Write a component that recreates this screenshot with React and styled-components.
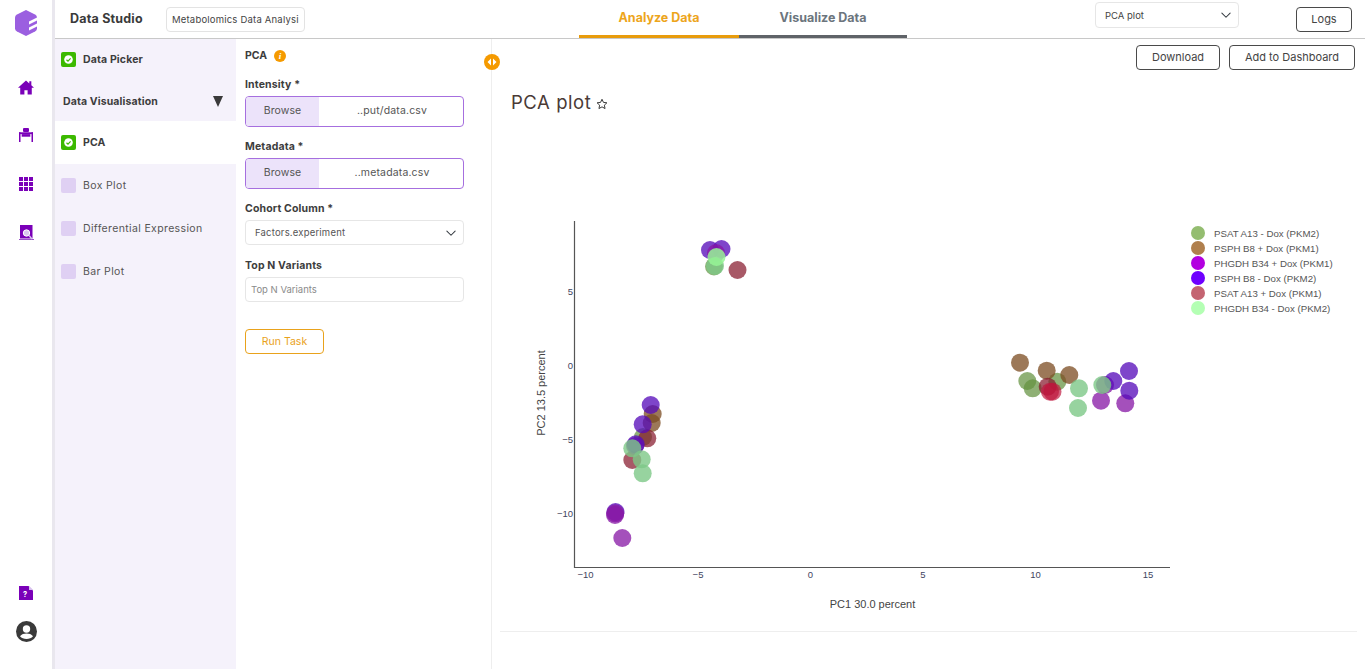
import React from 'react';
import styled, { createGlobalStyle } from 'styled-components';

const Global = createGlobalStyle`
  html, body { margin: 0; padding: 0; background: #fff; }
  * { box-sizing: border-box; }
  body { font-family: Inter, "Noto Sans", "Liberation Sans", sans-serif; color: #3d3d3d; }
`;

const Page = styled.div`display: flex; width: 100%; height: 100vh; overflow: hidden; background: #fff;`;
const Rail = styled.nav`
  width: 55px; flex: none; display: flex; flex-direction: column; align-items: center;
  border-right: 3px solid #e9e7ee; padding-bottom: 19px;
`;
const LogoSlot = styled.div`height: 46px; width: 100%; display: flex; align-items: center; justify-content: center; margin-bottom: 17px;`;
const NavSlot = styled.div`height: ${p => p.$h || 48.4}px; width: 100%; display: flex; align-items: center; justify-content: center;`;
const Spacer = styled.div`flex: 1;`;

const Shell = styled.div`flex: 1; min-width: 0; display: flex; flex-direction: column;`;
const Header = styled.header`
  height: 39px; flex: none; display: flex; align-items: flex-start; border-bottom: 1px solid #c8c8c8;
`;
const Brand = styled.div`font-size: 12.5px; font-weight: 700; letter-spacing: .2px; color: #3a3a3a; margin: 11px 0 0 15px; width: 96px; line-height: 15px;`;
const NameInput = styled.input`
  width: 139px; height: 25px; margin-top: 7px; border: 1px solid #e3e3e3; border-radius: 4px; padding: 0 5px;
  font: 400 9.5px Inter, sans-serif; letter-spacing: .2px; color: #444; outline: none; background: #fff;
`;
const Tabs = styled.div`display: flex; margin-left: 274px; height: 38px;`;
const Tab = styled.div`
  width: ${p => p.$w}px; height: 38px; text-align: center; padding-top: 10px; line-height: 16px;
  font-size: 12.500px; font-weight: 700; color: ${p => p.$c};
  border-bottom: 3px solid ${p => p.$c};
`;
const TabLabel = styled.span`color: ${p => p.$c};`;
const PlotSelect = styled.div`
  width: 144px; height: 26px; margin: 2px 0 0 188px; border: 1px solid #e6e6e6; border-radius: 4px;
  display: flex; align-items: center; justify-content: space-between; padding: 0 6px 0 9px;
  font-size: 9.5px; color: #444;
`;
const OutlineButton = styled.button`
  height: 25px; width: ${p => p.$w}px; border: 1px solid #4a4a4a; border-radius: 4px; background: #fff;
  font: 400 11px Inter, sans-serif; color: #444; padding: 0 0 2px; flex: none;
`;
const LogsButton = styled(OutlineButton)`margin: 7px 0 0 57px;`;

const Body = styled.div`flex: 1; min-height: 0; display: flex; position: relative;`;
const Sidebar = styled.aside`width: 181px; flex: none; background: #f5f2fb;`;
const StepRow = styled.div`
  height: ${p => p.$h || 43}px; display: flex; align-items: center; gap: 7px; padding-left: 6px;
  background: ${p => p.$active ? '#fff' : 'transparent'};
  font-size: 10.500px; font-weight: ${p => p.$bold ? 700 : 400}; letter-spacing: ${p => p.$bold ? '.15px' : '.36px'};
  color: ${p => p.$bold ? '#3d3d3d' : '#555'};
`;
const StepIdle = styled.span`width: 15px; height: 15px; border-radius: 2px; background: #dfd0f3; flex: none;`;
const GroupRow = styled.div`
  height: 41px; display: flex; align-items: center; justify-content: space-between; padding: 1px 13px 0 8px;
  font-size: 10.500px; font-weight: 700; letter-spacing: .12px; color: #3d3d3d;
`;
const Caret = styled.span`width: 0; height: 0; border-left: 5.5px solid transparent; border-right: 5.5px solid transparent; border-top: 11px solid #3a3a3a;`;

const Form = styled.section`width: 256px; flex: none; padding: 9px 0 0 9px; border-right: 1px solid #eeeeee;`;
const FormTitle = styled.div`display: flex; align-items: center; gap: 7px; height: 15px; font-size: 10.500px; font-weight: 700; color: #3d3d3d; margin-bottom: 14px;`;
const Label = styled.label`display: block; font-size: 10.500px; font-weight: 700; letter-spacing: .15px; color: #3d3d3d; line-height: 14px; padding-top: 1px; margin-bottom: 4px;`;
const FileField = styled.div`
  width: 219px; height: 31px; display: flex; border: 1px solid #a66fdf; border-radius: 4px; overflow: hidden; margin-bottom: 12px;
  font-size: 10.500px; color: #555; letter-spacing: .1px;
`;
const BrowseTag = styled.span`width: 73px; flex: none; background: #ece3fa; display: flex; align-items: center; justify-content: center; padding-bottom: 2px;`;
const FileName = styled.span`flex: 1; display: flex; align-items: center; justify-content: center; padding: 0 0 2px 2px; letter-spacing: .15px;`;
const SelectBox = styled.div`
  width: 219px; height: 25px; border: 1px solid #e6e6e6; border-radius: 4px; display: flex; align-items: center; justify-content: space-between;
  padding: 0 6px 0 9px; font-size: 9.5px; letter-spacing: .2px; color: #555; margin-bottom: 13px;
`;
const NumberInput = styled.input`
  display: block; width: 219px; height: 25px; border: 1px solid #e6e6e6; border-radius: 4px; padding: 0 5px;
  font: 400 9.5px Inter, sans-serif; color: #555; outline: none;
  &::placeholder { color: #8a8a8a; opacity: 1; }
`;
const RunButton = styled.button`
  display: block; width: 79px; height: 25px; margin-top: 27px; border: 1px solid #e9a21b; border-radius: 4px; background: #fff;
  font: 400 10.500px Inter, sans-serif; color: #e9a21b; padding: 0 0 1px;
`;
const Toggle = styled.button`
  position: absolute; left: 429px; top: 15px; width: 16px; height: 16px; border-radius: 50%; border: 0; padding: 0;
  background: #f59a00; display: flex; align-items: center; justify-content: center;
`;

const Main = styled.main`flex: 1; min-width: 0; display: flex; flex-direction: column;`;
const Actions = styled.div`display: flex; justify-content: flex-end; gap: 9px; padding: 6px 10px 0 0;`;
const PlotTitle = styled.h2`
  margin: 20px 0 0 19px; height: 24px; display: flex; align-items: center; gap: 5px;
  font-size: 18.500px; font-weight: 400; letter-spacing: .55px; line-height: 24px; color: #4a3a36;
`;
const ChartFrame = styled.div`margin-top: 86px; height: 431px; flex: none;`;
const Divider = styled.div`height: 1px; margin: 0 8px; background: #eeeeee;`;

const Svg = styled.svg`display: block;`;
const TickText = styled.text`font: 400 9.5px "Liberation Sans", sans-serif; fill: #3f4560;`;
const AxisTitle = styled.text`font: 400 11px "Liberation Sans", sans-serif; fill: #444;`;
const LegendText = styled.text`font: 400 9.700px "Liberation Sans", sans-serif; fill: #555;`;

const Check = () => (
  <svg width="15" height="15" viewBox="0 0 15 15" style={{ flex: 'none' }}>
    <rect width="15" height="15" rx="2" fill="#3cb900" />
    <circle cx="7.5" cy="7.5" r="4.3" fill="#fff" />
    <path d="M5.5 7.7l1.5 1.4 2.6-2.7" fill="none" stroke="#3cb900" strokeWidth="1.2" />
  </svg>
);
const Chevron = () => (
  <svg width="12" height="12" viewBox="0 0 16 16" fill="none" stroke="#343a40" strokeWidth="1.4" strokeLinecap="round" strokeLinejoin="round">
    <path d="M2.5 5.5L8 11l5.500-5.500" />
  </svg>
);
const Logo = () => (
  <svg width="22" height="26" viewBox="0 0 22 26">
    <path d="M11 0l9 4.500q2 1 2 3v11q0 2-2 3L11 26 2 21.500q-2-1-2-3v-11q0-2 2-3z" fill="#9b5fe0" />
    <path d="M22 7.500l-8 4v3l8-4zM22 13.500l-8 4v3l8-4z" fill="#fff" />
  </svg>
);
const Home = () => (
  <svg width="16" height="15" viewBox="0 0 18 16"><path d="M9 0L0 8.200h2.500V16h4.700v-5h3.600v5h4.700V8.200H18L15 5.500V1h-2.300v2.400z" fill="#7a00b8" /></svg>
);
const Desk = () => (
  <svg width="14" height="14" viewBox="0 0 14 14" fill="#7a00b8" style={{ marginBottom: 1 }}>
    <rect x="4" y="0" width="6" height="4" rx="1" />
    <rect x="0" y="4.300" width="14" height="1.800" />
    <rect x="0" y="4.300" width="1.500" height="9.700" />
    <rect x="12.500" y="4.300" width="1.500" height="9.700" />
    <rect x="2.700" y="6.100" width="8.600" height="2.600" />
  </svg>
);
const Grid = () => (
  <svg width="14" height="14" viewBox="0 0 14 14" fill="#7a00b8">
    {[0, 5, 10].map(y => [0, 5, 10].map(x => <rect key={`${x}-${y}`} x={x} y={y} width="4" height="4" />))}
  </svg>
);
const Report = () => (
  <svg width="15" height="15" viewBox="0 0 15 15">
    <rect x="1" y="0" width="12.500" height="13.500" fill="#7a00b8" />
    <rect x="0" y="14" width="15" height="1" fill="#9a50c8" />
    <circle cx="7.500" cy="8" r="3.200" fill="#d9c6ee" stroke="#fff" strokeWidth="1" />
    <path d="M10 10.500l3 3.500" stroke="#d9c6ee" strokeWidth="1.300" />
  </svg>
);
const HelpDoc = () => (
  <svg width="14" height="14" viewBox="0 0 14 14">
    <path d="M0 0h9.500L14 4.500V14H0z" fill="#7a00b8" />
    <path d="M10 0l4 4h-4z" fill="#d8c2ee" />
    <text x="6" y="11" fontSize="7.500" fontWeight="700" fill="#fff" textAnchor="middle" fontFamily="Inter, sans-serif">?</text>
  </svg>
);
const Account = () => (
  <svg width="21" height="21" viewBox="0 0 21 21">
    <circle cx="10.500" cy="10.500" r="10.500" fill="#3a3a3a" />
    <circle cx="10.500" cy="8" r="3.700" fill="#fff" />
    <path d="M4 15.300c1.500-2.200 4-2.900 6.500-2.900s5 .7 6.500 2.900c-1.500 1.700-3.800 2.800-6.500 2.800S5.500 17 4 15.300z" fill="#fff" />
  </svg>
);
const Info = () => (
  <svg width="12" height="12" viewBox="0 0 12 12">
    <circle cx="6" cy="6" r="6" fill="#f59a00" />
    <text x="6" y="9.300" fontSize="9" fontWeight="700" fontStyle="italic" fontFamily="'Liberation Serif', serif" fill="#fff" textAnchor="middle">i</text>
  </svg>
);
const Arrows = () => (
  <svg width="10" height="8" viewBox="0 0 10 8" fill="#fff"><path d="M4 0.500v7L0.500 4zM6 0.500v7L9.500 4z" /></svg>
);
const Star = () => (
  <svg width="12" height="12" viewBox="0 0 24 24" fill="none" stroke="#3a3a3a" strokeWidth="2" strokeLinejoin="round" style={{ marginTop: 3 }}>
    <path d="M12 2.500l2.900 6.300 6.900.8-5.100 4.700 1.400 6.800-6.100-3.400-6.100 3.400 1.400-6.800L2.200 9.600l6.900-.8z" />
  </svg>
);

const G = {
  o: 'rgba(100,146,64,.72)', b: 'rgba(125,78,35,.76)', m: 'rgba(135,25,165,.76)', p: 'rgba(85,10,185,.76)',
  c: 'rgba(135,25,45,.72)', r: 'rgba(190,20,60,.68)', g: 'rgba(125,200,135,.8)', l: 'rgba(150,245,150,.85)',
};
const points = [
  ['p', 710, 250], ['p', 721.5, 249], ['m', 716, 253], ['o', 714, 266.500], ['g', 715, 266], ['l', 716.500, 257], ['c', 737.500, 270],
  ['b', 652.700, 414], ['b', 651.700, 423], ['o', 643, 437], ['c', 647.300, 438.300], ['c', 632.300, 460], ['m', 635, 446], ['p', 635.700, 444.300],
  ['p', 642.700, 424.300], ['p', 650.700, 405], ['g', 632.300, 448.300], ['g', 641.700, 459.300], ['g', 642.700, 473.300],
  ['p', 615.500, 512], ['m', 615.300, 513.300], ['m', 615, 515], ['m', 622.300, 538],
  ['b', 1020, 362.700], ['o', 1027.300, 381], ['o', 1032.700, 388.300], ['o', 1057.300, 381.700], ['b', 1046.700, 370.700], ['b', 1069.300, 375],
  ['c', 1047.700, 386.700], ['r', 1050, 391.700], ['r', 1052.500, 391.700], ['m', 1105, 385], ['m', 1101, 400.700], ['m', 1125.300, 403.300],
  ['p', 1113.300, 381], ['p', 1129, 371], ['p', 1129.300, 390.700], ['g', 1079, 388.300], ['g', 1078, 408], ['g', 1102.300, 385],
];
const legend = [
  ['#94bd70', 'PSAT A13 - Dox (PKM2)'], ['#b07f4d', 'PSPH B8 + Dox (PKM1)'], ['#b300e0', 'PHGDH B34 + Dox (PKM1)'],
  ['#6f00ff', 'PSPH B8 - Dox (PKM2)'], ['#c46471', 'PSAT A13 + Dox (PKM1)'], ['#b4ffb4', 'PHGDH B34 - Dox (PKM2)'],
];
const xTicks = [['\u221210', 585.500], ['\u22125', 698], ['0', 810.500], ['5', 923], ['10', 1035.500], ['15', 1148]];
const yTicks = [['5', 291], ['0', 365], ['\u22125', 439], ['\u221210', 513]];

const Chart = () => (
  <Svg width="873" height="431" viewBox="492 200 873 431">
    <path d="M574.500 221V567.500H1170" fill="none" stroke="#555" strokeWidth="1.200" />
    {xTicks.map(([t, x]) => <TickText key={t} x={x} y="578" textAnchor="middle">{t}</TickText>)}
    {yTicks.map(([t, y]) => <TickText key={t} x="573" y={y + 3.500} textAnchor="end">{t}</TickText>)}
    <AxisTitle x="872.500" y="608" textAnchor="middle">PC1 30.0 percent</AxisTitle>
    <AxisTitle x="545" y="393" textAnchor="middle" transform="rotate(-90 545 393)">PC2 13.5 percent</AxisTitle>
    {points.map(([g, x, y], i) => <circle key={i} cx={x} cy={y} r="9" fill={G[g]} />)}
    {legend.map(([c, t], i) => (
      <g key={t}>
        <circle cx="1198" cy={233 + i * 15} r="7" fill={c} />
        <LegendText x="1214" y={236.500 + i * 15}>{t}</LegendText>
      </g>
    ))}
  </Svg>
);

export default function App() {
  return (
    <Page>
      <Global />
      <Rail>
        <LogoSlot><Logo /></LogoSlot>
        <NavSlot><Home /></NavSlot>
        <NavSlot><Desk /></NavSlot>
        <NavSlot><Grid /></NavSlot>
        <NavSlot><Report /></NavSlot>
        <Spacer />
        <NavSlot $h={38}><HelpDoc /></NavSlot>
        <NavSlot $h={38}><Account /></NavSlot>
      </Rail>
      <Shell>
        <Header>
          <Brand>Data Studio</Brand>
          <NameInput readOnly value="Metabolomics Data Analysis" />
          <Tabs>
            <Tab $w={160} $c="#e89c0c"><TabLabel $c="#eda51c">Analyze Data</TabLabel></Tab>
            <Tab $w={168} $c="#5f6368"><TabLabel $c="#6c757d">Visualize Data</TabLabel></Tab>
          </Tabs>
          <PlotSelect>PCA plot<Chevron /></PlotSelect>
          <LogsButton $w={56}>Logs</LogsButton>
        </Header>
        <Body>
          <Sidebar>
            <StepRow $bold $h={41}><Check />Data Picker</StepRow>
            <GroupRow>Data Visualisation<Caret /></GroupRow>
            <StepRow $bold $active><Check />PCA</StepRow>
            <StepRow><StepIdle />Box Plot</StepRow>
            <StepRow><StepIdle />Differential Expression</StepRow>
            <StepRow><StepIdle />Bar Plot</StepRow>
          </Sidebar>
          <Form>
            <FormTitle>PCA<Info /></FormTitle>
            <Label>Intensity *</Label>
            <FileField><BrowseTag>Browse</BrowseTag><FileName>..put/data.csv</FileName></FileField>
            <Label>Metadata *</Label>
            <FileField><BrowseTag>Browse</BrowseTag><FileName>..metadata.csv</FileName></FileField>
            <Label>Cohort Column *</Label>
            <SelectBox>Factors.experiment<Chevron /></SelectBox>
            <Label>Top N Variants</Label>
            <NumberInput placeholder="Top N Variants" />
            <RunButton>Run Task</RunButton>
          </Form>
          <Toggle aria-label="Toggle panel"><Arrows /></Toggle>
          <Main>
            <Actions>
              <OutlineButton $w={84}>Download</OutlineButton>
              <OutlineButton $w={126}>Add to Dashboard</OutlineButton>
            </Actions>
            <PlotTitle>PCA plot <Star /></PlotTitle>
            <ChartFrame><Chart /></ChartFrame>
            <Divider />
          </Main>
        </Body>
      </Shell>
    </Page>
  );
}
